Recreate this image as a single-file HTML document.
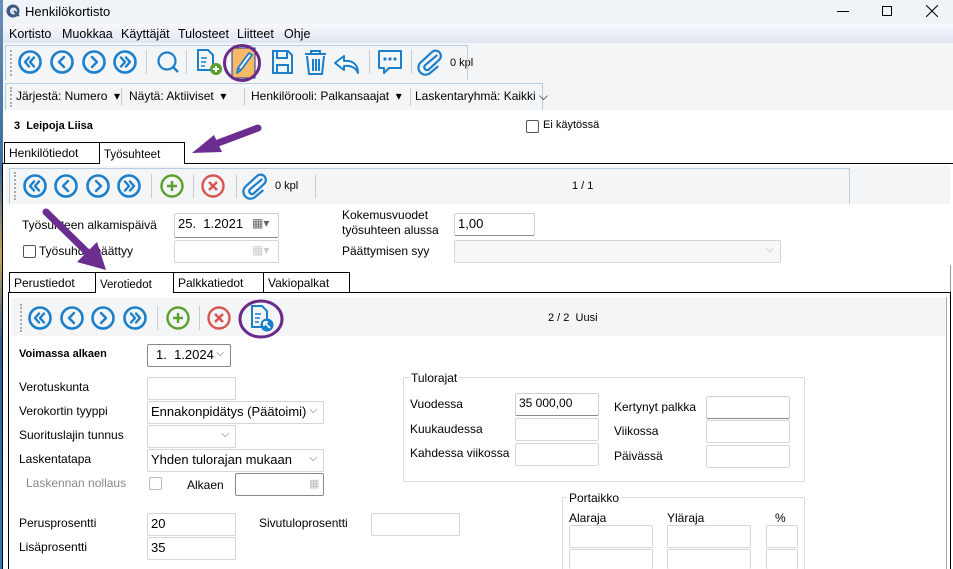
<!DOCTYPE html>
<html style="width:953px;height:569px;overflow:hidden"><head><meta charset="utf-8"><style>
*{box-sizing:border-box;margin:0;padding:0}
body{width:953px;height:569px;overflow:hidden;background:#fff;font-family:"Liberation Sans",Arial,sans-serif;font-size:12px;color:#000;position:relative}
.a{position:absolute;white-space:nowrap}
.in{position:absolute;border:1px solid #d6d6d6;border-radius:2px;background:#fff;font-size:13px;padding:2px 3px}
.in.b{border-color:#cfcfcf;border-bottom:1px solid #8a8a8a}
.chev{position:absolute;right:6px;top:3px;font-size:10px;color:#555}
.tab{position:absolute;border:1px solid #000;border-bottom:none;background:#fff;font-size:12px;padding:3px 4px}
.cb{position:absolute;width:13px;height:13px;border:1px solid #555;border-radius:2px;background:#fff}
.f{font-size:12px}
</style></head><body>
<div class="a" style="left:0;top:0;width:3px;height:569px;background:linear-gradient(#6a8fb5,#3a6a9a 30%,#c9a25a 45%,#2b5f8f 60%,#2f7cc0)"></div>
<div class="a" style="left:3px;top:0;width:950px;height:24px;background:#eff4f9"></div>
<svg class="a" style="left:6px;top:4px" width="14" height="14" viewBox="0 0 14 14"><circle cx="7" cy="7" r="6.5" fill="#3d5a80"/><circle cx="7.5" cy="7" r="3.5" fill="#dde6ef"/><path d="M8 7 L13 12" stroke="#3d5a80" stroke-width="2"/></svg>
<div class="a" style="left:25px;top:4px;font-size:13px">Henkilökortisto</div>
<div class="a" style="left:837px;top:11px;width:12px;height:1px;background:#000"></div>
<div class="a" style="left:882px;top:6px;width:10px;height:10px;border:1px solid #000"></div>
<svg class="a" style="left:926px;top:5px" width="12" height="12"><path d="M0 0L12 12M12 0L0 12" stroke="#000" stroke-width="1"/></svg>
<div class="a" style="left:3px;top:24px;width:950px;height:19px;background:linear-gradient(#f6f8fc,#dfe6f2)"></div>
<div class="a" style="left:9px;top:27px;font-size:12.5px">Kortisto</div>
<div class="a" style="left:62px;top:27px;font-size:12.5px">Muokkaa</div>
<div class="a" style="left:121px;top:27px;font-size:12.5px">Käyttäjät</div>
<div class="a" style="left:178px;top:27px;font-size:12.5px">Tulosteet</div>
<div class="a" style="left:237px;top:27px;font-size:12.5px">Liitteet</div>
<div class="a" style="left:284px;top:27px;font-size:12.5px">Ohje</div>
<div class="a" style="left:3px;top:43px;width:950px;height:67px;background:#f4f5f7"></div>
<div class="a" style="left:5px;top:45px;width:463px;height:35px;border:1px solid #b8cde2;border-bottom:none"></div>
<div class="a" style="left:5px;top:83px;width:538px;height:27px;border:1px solid #b8cde2;border-bottom:none"></div>
<div class="a" style="left:10px;top:50px;height:26px;border-left:2px dotted #aaa"></div>
<div class="a" style="left:10px;top:87px;height:20px;border-left:2px dotted #aaa"></div>
<div class="a" style="left:16px;top:89px;font-size:12px">Järjestä: Numero &nbsp;▾</div>
<div class="a" style="left:121px;top:88px;height:18px;border-left:1px solid #ccc"></div>
<div class="a" style="left:129px;top:89px;font-size:12px">Näytä: Aktiiviset &nbsp;▾</div>
<div class="a" style="left:244px;top:88px;height:18px;border-left:1px solid #ccc"></div>
<div class="a" style="left:251px;top:89px;font-size:12px">Henkilörooli: Palkansaajat &nbsp;▾</div>
<div class="a" style="left:410px;top:88px;height:18px;border-left:1px solid #ccc"></div>
<div class="a" style="left:415px;top:89px;font-size:12px">Laskentaryhmä: Kaikki ⌵</div>
<div class="a" style="left:450px;top:57px;font-size:11px">0 kpl</div>

<div class="a" style="left:14px;top:120px;font-size:11px;font-weight:bold">3&nbsp; Leipoja Liisa</div>
<div class="cb" style="left:526px;top:120px"></div>
<div class="a" style="left:543px;top:119px;font-size:11px">Ei käytössä</div>

<div class="a" style="left:2px;top:163px;width:951px;border-top:1px solid #000"></div>
<div class="a" style="left:2px;top:163px;height:406px;border-left:1px solid #000"></div>
<div class="tab" style="left:4px;top:142px;width:96px;height:21px;font-size:12px">Henkilötiedot</div>
<div class="tab" style="left:99px;top:142px;width:86px;height:22px;padding-top:6px;font-size:11.5px">Työsuhteet</div>
<div class="a" style="left:6px;top:166px;width:944px;height:38px;background:#f4f5f7"></div>
<div class="a" style="left:9px;top:168px;width:841px;height:36px;border:1px solid #b8cde2;border-bottom:none"></div>
<div class="a" style="left:14px;top:172px;height:28px;border-left:2px dotted #aaa"></div>
<div class="a" style="left:275px;top:180px;font-size:11px">0 kpl</div>
<div class="a" style="left:572px;top:180px;font-size:11px">1 / 1</div>
<div class="a" style="left:950px;top:265px;height:304px;border-left:1px solid #999"></div>

<div class="a" style="left:22px;top:218px;font-size:12px">Työsuhteen alkamispäivä</div>
<div class="in b" style="left:174px;top:213px;width:105px;height:25px">25.&nbsp; 1.2021</div>
<div class="a" style="left:252px;top:216px;color:#666;font-size:12px">▦▾</div>
<div class="cb" style="left:23px;top:245px"></div>
<div class="a" style="left:39px;top:244px;font-size:12px">Työsuhde päättyy</div>
<div class="in" style="left:174px;top:240px;width:105px;height:23px;background:#fff"></div>
<div class="a" style="left:252px;top:243px;color:#ccc;font-size:12px">▦▾</div>
<div class="a" style="left:342px;top:208px;font-size:12px;line-height:15px">Kokemusvuodet<br>työsuhteen alussa</div>
<div class="in b" style="left:454px;top:213px;width:81px;height:23px">1,00</div>
<div class="a" style="left:342px;top:244px;font-size:12px">Päättymisen syy</div>
<div class="in" style="left:454px;top:240px;width:327px;height:23px;background:#f7f7f7"></div>
<div class="a" style="left:766px;top:244px;font-size:10px;color:#aaa">⌵</div>

<div class="a" style="left:8px;top:292px;width:943px;border-top:1px solid #000"></div>
<div class="a" style="left:8px;top:292px;height:277px;border-left:1px solid #000"></div>
<div class="a" style="left:950px;top:292px;height:277px;border-left:1px solid #000"></div>
<div class="a" style="left:946px;top:297px;height:272px;border-left:1px solid #aaa"></div>
<div class="tab" style="left:9px;top:272px;width:87px;height:20px">Perustiedot</div>
<div class="tab" style="left:95px;top:272px;width:79px;height:21px;padding-top:6px;font-size:11.5px">Verotiedot</div>
<div class="tab" style="left:173px;top:272px;width:91px;height:20px">Palkkatiedot</div>
<div class="tab" style="left:263px;top:272px;width:87px;height:20px">Vakiopalkat</div>
<div class="a" style="left:12px;top:298px;width:934px;height:38px;background:#f4f5f7"></div>
<div class="a" style="left:20px;top:304px;height:28px;border-left:2px dotted #aaa"></div>
<div class="a" style="left:548px;top:312px;font-size:11px">2 / 2&nbsp; Uusi</div>

<div class="a" style="left:19px;top:348px;font-size:11px;font-weight:bold">Voimassa alkaen</div>
<div class="in" style="left:147px;top:344px;width:84px;height:23px;border-color:#888;padding-left:8px">1.&nbsp; 1.2024<span class="chev">⌵</span></div>
<div class="a f" style="left:19px;top:380px">Verotuskunta</div>
<div class="in" style="left:147px;top:377px;width:89px;height:23px"></div>
<div class="a f" style="left:19px;top:404px">Verokortin tyyppi</div>
<div class="in" style="left:147px;top:401px;width:177px;height:23px">Ennakonpidätys (Päätoimi)<span class="chev">⌵</span></div>
<div class="a f" style="left:19px;top:428px">Suorituslajin tunnus</div>
<div class="in" style="left:147px;top:425px;width:89px;height:23px"><span class="chev">⌵</span></div>
<div class="a f" style="left:19px;top:452px">Laskentatapa</div>
<div class="in" style="left:147px;top:449px;width:177px;height:23px">Yhden tulorajan mukaan<span class="chev">⌵</span></div>
<div class="a f" style="left:26px;top:476px;color:#888">Laskennan nollaus</div>
<div class="cb" style="left:149px;top:477px;border-color:#bbb"></div>
<div class="a f" style="left:187px;top:478px">Alkaen</div>
<div class="in" style="left:235px;top:473px;width:89px;height:23px;border-color:#888"></div>
<div class="a" style="left:309px;top:477px;color:#bbb;font-size:11px">▦</div>
<div class="a f" style="left:19px;top:516px">Perusprosentti</div>
<div class="in" style="left:147px;top:513px;width:89px;height:23px">20</div>
<div class="a f" style="left:259px;top:516px">Sivutuloprosentti</div>
<div class="in" style="left:371px;top:513px;width:89px;height:23px"></div>
<div class="a f" style="left:19px;top:540px">Lisäprosentti</div>
<div class="in" style="left:147px;top:537px;width:89px;height:23px">35</div>

<div class="a" style="left:403px;top:377px;width:402px;height:105px;border:1px solid #ddd"></div>
<div class="a f" style="left:409px;top:371px;background:#fff;padding:0 2px">Tulorajat</div>
<div class="a f" style="left:410px;top:397px">Vuodessa</div>
<div class="in b" style="left:515px;top:393px;width:84px;height:23px;font-size:12px">35 000,00</div>
<div class="a f" style="left:410px;top:422px">Kuukaudessa</div>
<div class="in" style="left:515px;top:418px;width:84px;height:23px"></div>
<div class="a f" style="left:410px;top:446px">Kahdessa viikossa</div>
<div class="in" style="left:515px;top:443px;width:84px;height:23px"></div>
<div class="a f" style="left:614px;top:400px">Kertynyt palkka</div>
<div class="in b" style="left:706px;top:396px;width:84px;height:23px"></div>
<div class="a f" style="left:614px;top:424px">Viikossa</div>
<div class="in" style="left:706px;top:420px;width:84px;height:23px"></div>
<div class="a f" style="left:614px;top:449px">Päivässä</div>
<div class="in" style="left:706px;top:445px;width:84px;height:23px"></div>

<div class="a" style="left:562px;top:497px;width:243px;height:72px;border:1px solid #ddd;border-bottom:none"></div>
<div class="a f" style="left:567px;top:491px;background:#fff;padding:0 2px">Portaikko</div>
<div class="a f" style="left:569px;top:511px">Alaraja</div>
<div class="a f" style="left:667px;top:511px">Yläraja</div>
<div class="a f" style="left:775px;top:511px">%</div>
<div class="in" style="left:569px;top:525px;width:84px;height:23px"></div>
<div class="in" style="left:667px;top:525px;width:84px;height:23px"></div>
<div class="in" style="left:766px;top:525px;width:32px;height:23px"></div>
<div class="in" style="left:569px;top:549px;width:84px;height:20px;border-bottom:none"></div>
<div class="in" style="left:667px;top:549px;width:84px;height:20px;border-bottom:none"></div>
<div class="in" style="left:766px;top:549px;width:32px;height:20px;border-bottom:none"></div>

<svg class="a" style="left:0;top:0" width="953" height="569">
<defs>
<g id="c"><circle r="10.5" fill="none" stroke="#1c7fcb" stroke-width="2.6"/></g>
<g id="ff"><use href="#c"/><path d="M-5 -4.5L-1 0L-5 4.5M0 -4.5L4 0L0 4.5" fill="none" stroke="#1c7fcb" stroke-width="2.4" stroke-linecap="round" stroke-linejoin="round" transform="translate(1,0)"/></g>
<g id="rr"><use href="#ff" transform="scale(-1,1)"/></g>
<g id="nx"><use href="#c"/><path d="M-2 -5L3 0L-2 5" fill="none" stroke="#1c7fcb" stroke-width="2.4" stroke-linecap="round" stroke-linejoin="round"/></g>
<g id="pv"><use href="#nx" transform="scale(-1,1)"/></g>
<g id="add"><circle r="10.5" fill="none" stroke="#5aa02c" stroke-width="2.4"/><path d="M-5 0H5M0 -5V5" stroke="#5aa02c" stroke-width="2.4"/></g>
<g id="del"><circle r="10.5" fill="none" stroke="#d9534f" stroke-width="2.4"/><path d="M-4 -4L4 4M4 -4L-4 4" stroke="#d9534f" stroke-width="2.4"/></g>
<g id="clip"><path d="M6 -7L-5 4A3 3 0 0 0 -1 8L9 -3A5 5 0 0 0 1 -10L-9 1A7 7 0 0 0 1 11L8 4" fill="none" stroke="#1c7fcb" stroke-width="2.2" stroke-linecap="round" transform="rotate(5)"/></g>
<g id="sep"><rect x="0" y="-12" width="1" height="24" fill="#ccc"/></g>
</defs>
<use href="#rr" x="30" y="62"/><use href="#pv" x="62" y="62"/><use href="#nx" x="94" y="62"/><use href="#ff" x="125" y="62"/>
<use href="#sep" x="146" y="62"/>
<circle cx="167" cy="61" r="8.5" fill="none" stroke="#1c7fcb" stroke-width="2.2"/><path d="M173 67L178 72" stroke="#1c7fcb" stroke-width="2.4"/>
<use href="#sep" x="186" y="62"/>
<path d="M198 50H208L213 55V70H198Z" fill="none" stroke="#1c7fcb" stroke-width="2"/><path d="M201 58h6M201 62h5M201 66h4" stroke="#1c7fcb" stroke-width="1.5"/>
<circle cx="216" cy="69" r="6" fill="#5aa02c"/><path d="M213 69h6M216 66v6" stroke="#fff" stroke-width="2"/>
<rect x="232" y="48" width="23" height="30" fill="#f7b867"/><rect x="232" y="48" width="23" height="30" fill="none" stroke="#1a3b8a" stroke-width="1"/>
<path d="M237 73L238 68L249 53L252 55L241 70Z" fill="#fff" stroke="#1c7fcb" stroke-width="1.8" stroke-linejoin="round"/><path d="M238 68L241 70" stroke="#1c7fcb" stroke-width="1.5"/>
<circle cx="242" cy="63" r="17.5" fill="none" stroke="#6a2a8a" stroke-width="3"/>
<path d="M273 51H288L292 55V73H273Z M277 51V58H287V51 M277 73V65H288V73" fill="none" stroke="#1c7fcb" stroke-width="2"/>
<path d="M305 54H326M311 54V51H320V54M307 56L309 74H322L324 56M313 59V71M316 59V71M319 59V71" fill="none" stroke="#1c7fcb" stroke-width="2"/>
<path d="M358 73C358 64 352 60 344 61V56L335 63L344 70V66C351 65 356 68 358 73Z" fill="#fff" stroke="#1c7fcb" stroke-width="2" stroke-linejoin="round"/>
<use href="#sep" x="369" y="62"/>
<path d="M379 51H401V68H389L384 73V68H379Z" fill="none" stroke="#1c7fcb" stroke-width="2" stroke-linejoin="round"/><circle cx="385" cy="59" r="1.6" fill="#1c7fcb"/><circle cx="390" cy="59" r="1.6" fill="#1c7fcb"/><circle cx="395" cy="59" r="1.6" fill="#1c7fcb"/>
<use href="#sep" x="411" y="62"/>
<use href="#clip" x="430" y="62"/>
<use href="#sep" x="467" y="62"/>
<use href="#rr" x="35" y="186"/><use href="#pv" x="66" y="186"/><use href="#nx" x="98" y="186"/><use href="#ff" x="129" y="186"/>
<use href="#sep" x="151" y="186"/>
<use href="#add" x="172" y="186"/>
<use href="#sep" x="193" y="186"/>
<use href="#del" x="213" y="186"/>
<use href="#sep" x="236" y="186"/>
<use href="#clip" x="255" y="186"/>
<use href="#sep" x="315" y="186"/>
<use href="#rr" x="40" y="318"/><use href="#pv" x="72" y="318"/><use href="#nx" x="103" y="318"/><use href="#ff" x="135" y="318"/>
<use href="#sep" x="157" y="318"/>
<use href="#add" x="178" y="318"/>
<use href="#sep" x="199" y="318"/>
<use href="#del" x="219" y="318"/>
<path d="M252 306H262L267 311V327H252Z" fill="none" stroke="#1c7fcb" stroke-width="2"/><path d="M255 314h6M255 318h5M255 322h4" stroke="#1c7fcb" stroke-width="1.5"/>
<circle cx="267" cy="325" r="6.5" fill="#1c7fcb"/><path d="M264 322L270 328M264 322h4M264 322v4" stroke="#fff" stroke-width="1.8"/>
<ellipse cx="261" cy="319" rx="21" ry="18" fill="none" stroke="#6a2a8a" stroke-width="3"/>
<path d="M258 128L210 146" stroke="#6c2d91" stroke-width="7" stroke-linecap="round"/>
<path d="M192 153L214 135L222 152Z" fill="#6c2d91"/>
<path d="M46 212L90 255" stroke="#6c2d91" stroke-width="7" stroke-linecap="round"/>
<path d="M106 270L77 262L97 242Z" fill="#6c2d91"/>
</svg>
</body></html>
